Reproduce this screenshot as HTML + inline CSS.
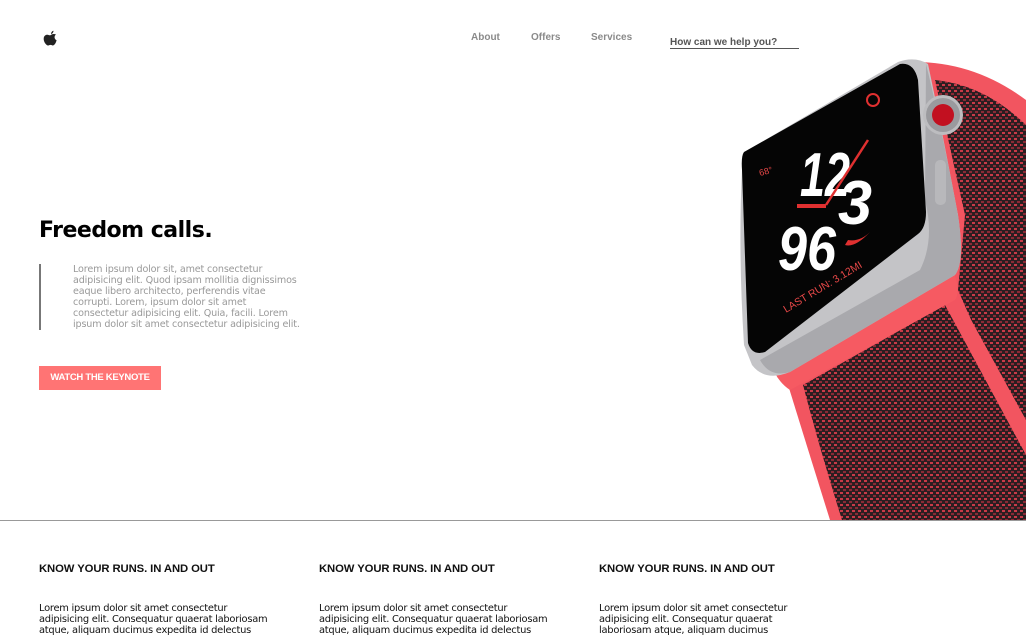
<!DOCTYPE html>
<html><head><meta charset="utf-8"><style>
*{margin:0;padding:0;box-sizing:border-box}
body{width:1026px;height:636px;overflow:hidden;background:#fff;font-family:"Liberation Sans",sans-serif;position:relative}
.nav a{position:absolute;top:32px;font-size:10px;font-weight:bold;color:#8a8a8a;text-decoration:none}
h1{position:absolute;left:39px;top:218px;font-size:22px;font-weight:bold;color:#000;font-family:"DejaVu Sans",sans-serif;letter-spacing:-0.5px}
.quote{position:absolute;left:39px;top:264px;height:66px;border-left:2px solid #777;padding-left:32px;font-family:"DejaVu Sans",sans-serif;font-size:9.6px;line-height:11px;color:#999;white-space:nowrap;letter-spacing:-0.15px}
.btn{position:absolute;left:39px;top:366px;width:122px;height:24px;background:#ff7474;color:#fff;font-size:9.5px;font-weight:bold;line-height:24px;text-align:center;letter-spacing:-0.3px}
.hr{position:absolute;left:0;top:520px;width:1026px;height:1px;background:#999}
.col{position:absolute;top:563px;white-space:nowrap}
.col h3{font-size:11.3px;font-weight:bold;color:#111;margin-bottom:28px;letter-spacing:-0.1px}
.col p{font-family:"DejaVu Sans",sans-serif;font-size:9.9px;line-height:11px;color:#111;letter-spacing:-0.25px}
.w{font-family:"Liberation Sans",sans-serif;font-weight:bold;font-style:italic;fill:#fff}
</style></head><body>
<svg style="position:absolute;left:40px;top:30px" width="22" height="20" viewBox="0 0 22 20"><path d="M11 5c1-1 3-1.3 5-.5-2 1.3-2 4.5.6 5.8-.7 2.5-2 5-3.6 5.2-1 .1-1.4-.6-2.4-.6s-1.5.6-2.4.6C6 15.5 3 11 3.8 7.6c.6-2.5 3-3.3 4.7-2.6 1 .4 1.7.4 2.5 0z" fill="#222"/><path d="M11 4c0-1.5 1-3 2.5-3.3 0 1.6-1 3-2.5 3.3z" fill="#222"/></svg>
<div class="nav"><a style="left:471px">About</a><a style="left:531px">Offers</a><a style="left:591px">Services</a>
<a style="left:670px;top:37px;color:#555;border-bottom:1.5px solid #555;width:129px">How can we help you?</a></div>
<h1>Freedom calls.</h1>
<div class="quote">Lorem ipsum dolor sit, amet consectetur<br>adipisicing elit. Quod ipsam mollitia dignissimos<br>eaque libero architecto, perferendis vitae<br>corrupti. Lorem, ipsum dolor sit amet<br>consectetur adipisicing elit. Quia, facili. Lorem<br>ipsum dolor sit amet consectetur adipisicing elit.</div>
<div class="btn">WATCH THE KEYNOTE</div>
<svg style="position:absolute;left:0;top:0" width="1026" height="520">
<defs><pattern id="wv" width="6" height="6" patternUnits="userSpaceOnUse"><rect width="6" height="6" fill="#2b1e21"/><rect width="3" height="2" fill="#c93a48"/><rect x="3" y="3" width="3" height="2" fill="#8a2a36"/></pattern></defs>
<path d="M915 62 Q975 62 1026 100 L1026 470 L945 300 L958 215 Z" fill="#f25560"/>
<path d="M935 80 Q985 85 1026 125 L1026 445 L958 290 L965 215 Z" fill="url(#wv)"/>
<path d="M785 375 L952 285 L1026 420 L1026 520 L830 520 Q805 440 785 375 Z" fill="#f25560"/>
<path d="M803 385 L945 305 L1026 455 L1026 520 L842 520 Q820 450 803 385 Z" fill="url(#wv)"/>
<path d="M770 360 L950 262 Q962 290 955 300 L790 390 Q775 380 770 360 Z" fill="#f65a62"/>
<path d="M748 150 L898 62 Q915 56 928 64 Q940 120 958 215 Q965 262 955 275 L790 372 Q765 382 752 365 L744 345 Q738 250 742 170 Q742 155 748 150 Z" fill="#c4c4c7"/>
<path d="M926 64 Q940 120 958 215 Q965 262 955 275 L790 372 Q770 378 760 360 L920 270 Q935 240 925 200 Z" fill="#a9a9ad"/>
<path d="M744 152 L900 64 Q914 62 918 80 L926 212 Q926 228 918 234 L765 352 Q752 356 748 343 L742 170 Q741 156 744 152 Z" fill="#050505"/>
<circle cx="943" cy="115" r="20" fill="#bdbdc0"/><circle cx="943" cy="115" r="17" fill="#9a9a9e"/><circle cx="943" cy="115" r="11" fill="#c21020"/>
<rect x="935" y="160" width="11" height="45" rx="5" fill="#b8b8bb"/>
<text x="760" y="176" font-size="9" fill="#e84848" transform="rotate(-15 760 176)">68°</text>
<circle cx="873" cy="100" r="6" fill="none" stroke="#e03030" stroke-width="2"/>
<text class="w" x="800" y="196" font-size="62" textLength="50" lengthAdjust="spacingAndGlyphs">12</text>
<text class="w" x="838" y="224" font-size="62" textLength="34" lengthAdjust="spacingAndGlyphs">3</text>
<text class="w" x="778" y="270" font-size="62" textLength="58" lengthAdjust="spacingAndGlyphs">96</text>
<line x1="826" y1="205" x2="868" y2="140" stroke="#e03030" stroke-width="2.5"/>
<line x1="797" y1="206" x2="826" y2="206" stroke="#e03030" stroke-width="4"/>
<path d="M845 245 Q855 248 870 232 Q860 242 848 240 Z" fill="#e03030"/>
<text x="786" y="313" font-size="10.5" fill="#e84848" transform="rotate(-31 786 313)">LAST RUN: 3.12MI</text>
</svg>
<div class="hr"></div>
<div class="col" style="left:39px"><h3>KNOW YOUR RUNS. IN AND OUT</h3><p>Lorem ipsum dolor sit amet consectetur<br>adipisicing elit. Consequatur quaerat laboriosam<br>atque, aliquam ducimus expedita id delectus</p></div>
<div class="col" style="left:319px"><h3>KNOW YOUR RUNS. IN AND OUT</h3><p>Lorem ipsum dolor sit amet consectetur<br>adipisicing elit. Consequatur quaerat laboriosam<br>atque, aliquam ducimus expedita id delectus</p></div>
<div class="col" style="left:599px"><h3>KNOW YOUR RUNS. IN AND OUT</h3><p>Lorem ipsum dolor sit amet consectetur<br>adipisicing elit. Consequatur quaerat<br>laboriosam atque, aliquam ducimus</p></div>
</body></html>
